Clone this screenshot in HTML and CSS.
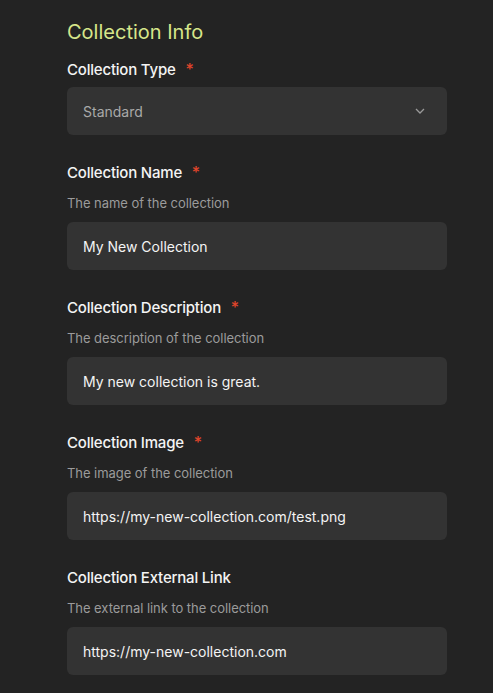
FILE: index.html
```html
<!DOCTYPE html>
<html>
<head>
<meta charset="utf-8">
<link rel="stylesheet" href="styles.css">
</head>
<body>
<div class="form">
  <h2 class="title">Collection Info</h2>

  <div class="field field-first">
    <div class="label">Collection Type <span class="req">*</span></div>
    <div class="select">
      <span class="select-text">Standard</span>
      <svg class="chev" width="10" height="6" viewBox="0 0 10 6"><path d="M1 1l4 4 4-4" fill="none" stroke="#9a9a9a" stroke-width="1.3"/></svg>
    </div>
  </div>

  <div class="field">
    <div class="label">Collection Name <span class="req">*</span></div>
    <div class="desc">The name of the collection</div>
    <div class="input">My New Collection</div>
  </div>

  <div class="field">
    <div class="label">Collection Description <span class="req">*</span></div>
    <div class="desc">The description of the collection</div>
    <div class="input">My new collection is great.</div>
  </div>

  <div class="field">
    <div class="label">Collection Image <span class="req">*</span></div>
    <div class="desc">The image of the collection</div>
    <div class="input">https://my-new-collection.com/test.png</div>
  </div>

  <div class="field">
    <div class="label">Collection External Link</div>
    <div class="desc">The external link to the collection</div>
    <div class="input">https://my-new-collection.com</div>
  </div>
</div>
</body>
</html>
```
FILE: styles.css
```css
html, body {
  margin: 0;
  padding: 0;
  background: #232323;
}
body {
  font-family: Inter, "Noto Sans", sans-serif;
  color: #f2f2f2;
}
.form {
  width: 380px;
  padding: 20px 0 0 67px;
  display: flex;
  flex-direction: column;
}
.title {
  margin: 0;
  font-size: 20px;
  line-height: 24px;
  font-weight: 400;
  color: #d6e68a;
  letter-spacing: 0;
}
.field {
  display: flex;
  flex-direction: column;
  margin-top: 28px;
}
.field-first {
  margin-top: 16px;
}
.label {
  height: 20px;
  font-size: 15px;
  line-height: 20px;
  font-weight: 500;
  color: #f4f4f4;
  letter-spacing: -0.2px;
  white-space: nowrap;
}
.req {
  color: #e0452b;
  margin-left: 6px;
  font-size: 16px;
  line-height: 1;
}
.desc {
  margin-top: 11px;
  height: 18px;
  font-size: 13px;
  line-height: 18px;
  color: #9b9b9b;
  letter-spacing: -0.05px;
}
.select {
  margin-top: 7px;
  height: 48px;
  background: #333333;
  border-radius: 6px;
  display: flex;
  align-items: center;
  justify-content: space-between;
  padding: 0 22px 0 16px;
}
.select-text {
  font-size: 14px;
  color: #a9a9a9;
}
.chev {
  display: block;
}
.input {
  margin-top: 10px;
  height: 48px;
  background: #333333;
  border-radius: 6px;
  display: flex;
  align-items: center;
  padding: 0 16px;
  font-size: 14px;
  font-weight: 400;
  color: #f4f4f4;
}
```
